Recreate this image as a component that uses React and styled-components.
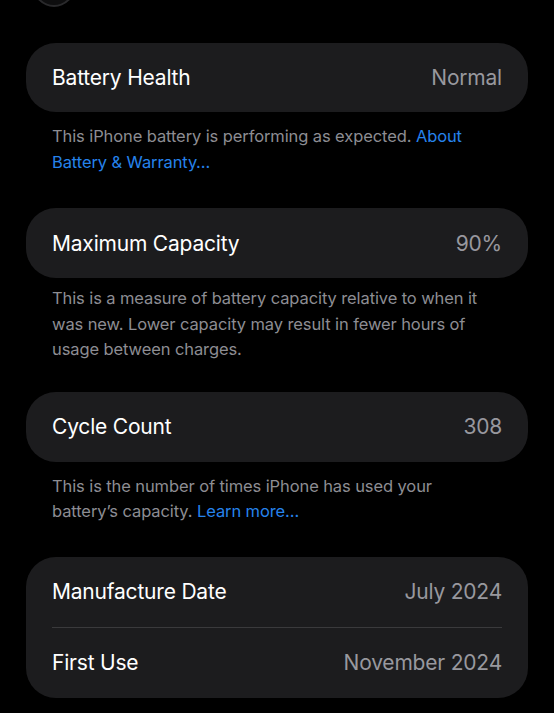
import React from "react";
import styled, { createGlobalStyle } from "styled-components";

const Global = createGlobalStyle`
  html, body { margin: 0; padding: 0; background: #000; }
  body { font-family: Inter, "Noto Sans", "Liberation Sans", sans-serif; -webkit-font-smoothing: antialiased; }
`;

const Page = styled.div`
  width: 554px;
  min-height: 713px;
  background: #000;
  display: flex;
  flex-direction: column;
  padding: 0 26px;
  box-sizing: border-box;
`;

const Peek = styled.div`
  height: 7px;
  overflow: hidden;
  display: flex;
  align-items: flex-end;
  padding-left: 7px;
  margin-bottom: 36px;
`;

const Avatar = styled.div`
  flex-shrink: 0;
  width: 42px;
  height: 42px;
  border-radius: 50%;
  box-sizing: border-box;
  border: 2px solid #2a2a2c;
  background: #0e0e0f;
`;

const Section = styled.section`
  display: flex;
  flex-direction: column;
  margin-bottom: ${(p) => p.$gap || 0}px;
`;

const Card = styled.div`
  background: #1c1c1e;
  border-radius: 30px;
  padding: 0 26px;
  display: flex;
  flex-direction: column;
`;

const Row = styled.div`
  height: ${(p) => p.$h || 70}px;
  display: flex;
  align-items: center;
  justify-content: space-between;
  font-size: 21px;
  letter-spacing: -0.2px;
  box-sizing: border-box;
  border-top: ${(p) => (p.$divider ? "1px solid #3a3a3c" : "none")};
`;

const Label = styled.span`
  color: #fff;
`;

const Value = styled.span`
  color: #98989e;
`;

const Footer = styled.p`
  margin: 0;
  padding: ${(p) => p.$pt || 11}px 26px 0;
  font-size: 16.5px;
  line-height: 25.5px;
  color: #8d8d93;
  letter-spacing: -0.1px;
`;

const Link = styled.a`
  color: #2683ec;
  text-decoration: none;
`;

export default function App() {
  return (
    <>
      <Global />
      <Page>
        <Peek>
          <Avatar />
        </Peek>
        <Section $gap={33}>
          <Card>
            <Row $h={69}>
              <Label>Battery Health</Label>
              <Value>Normal</Value>
            </Row>
          </Card>
          <Footer $pt={12}>
            This iPhone battery is performing as expected.{" "}
            <Link>About Battery &amp; Warranty…</Link>
          </Footer>
        </Section>
        <Section $gap={29}>
          <Card>
            <Row>
              <Label>Maximum Capacity</Label>
              <Value>90%</Value>
            </Row>
          </Card>
          <Footer $pt={8}>
            This is a measure of battery capacity relative to when it was new.
            Lower capacity may result in fewer hours of usage between charges.
          </Footer>
        </Section>
        <Section $gap={32}>
          <Card>
            <Row>
              <Label>Cycle Count</Label>
              <Value>308</Value>
            </Row>
          </Card>
          <Footer $pt={12}>
            This is the number of times iPhone has used your battery’s capacity.{" "}
            <Link>Learn more…</Link>
          </Footer>
        </Section>
        <Section>
          <Card>
            <Row>
              <Label>Manufacture Date</Label>
              <Value>July 2024</Value>
            </Row>
            <Row $h={71} $divider>
              <Label>First Use</Label>
              <Value>November 2024</Value>
            </Row>
          </Card>
        </Section>
      </Page>
    </>
  );
}
